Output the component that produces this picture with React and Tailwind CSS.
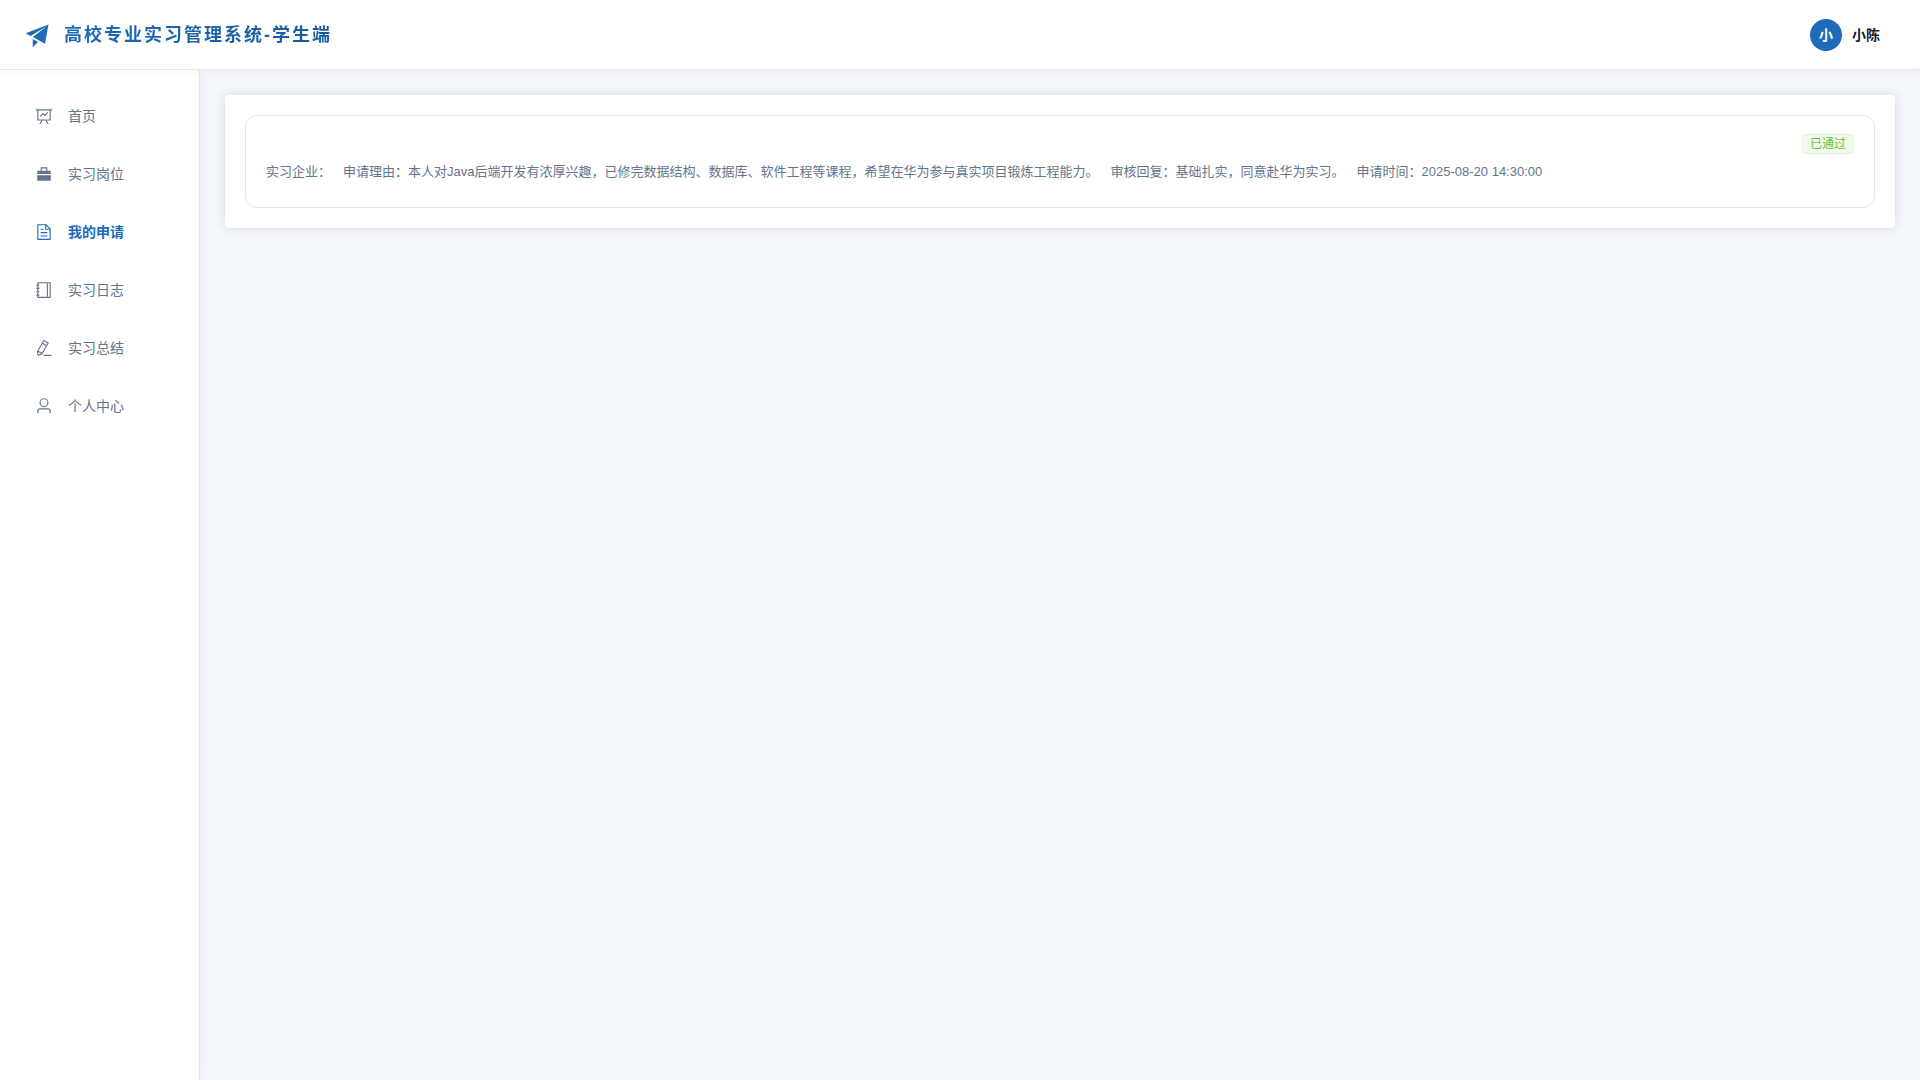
import React, { useState } from 'react';

const icons = {
  promotion: ['m64 448 832-320-128 704-446.08-243.328L832 192 242.816 545.472 64 448zm256 512V657.024L512 768 320 960z'],
  dataLine: ['M359.168 768H160a32 32 0 0 1-32-32V192H64a32 32 0 0 1 0-64h896a32 32 0 1 1 0 64h-64v544a32 32 0 0 1-32 32H665.216l110.848 192h-73.856L591.36 768H433.024L322.176 960H248.32l110.848-192zM832 192H192v512h640V192zM342.656 534.656a32 32 0 1 1-45.312-45.312L444.992 341.76l125.44 94.08L679.04 300.032a32 32 0 1 1 49.92 39.936L581.632 524.224 451.008 426.24 342.656 534.592z'],
  briefcase: ['M320 320V128h384v192h192v192H128V320h192zM128 576h768v320H128V576zm256-256h256.064V192H384v128z'],
  document: ['M832 384H576V128H192v768h640V384zm-26.496-64L640 154.496V320h165.504zM160 64h480l256 256v608a32 32 0 0 1-32 32H160a32 32 0 0 1-32-32V96a32 32 0 0 1 32-32zm160 448h384v64H320v-64zm0-192h160v64H320v-64zm0 384h384v64H320v-64z'],
  notebook: [
    'M192 128v768h640V128H192zm-32-64h704a32 32 0 0 1 32 32v832a32 32 0 0 1-32 32H160a32 32 0 0 1-32-32V96a32 32 0 0 1 32-32z',
    'M672 128h64v768h-64zM96 192h128q32 0 32 32t-32 32H96q-32 0-32-32t32-32zm0 192h128q32 0 32 32t-32 32H96q-32 0-32-32t32-32zm0 192h128q32 0 32 32t-32 32H96q-32 0-32-32t32-32zm0 192h128q32 0 32 32t-32 32H96q-32 0-32-32t32-32z',
  ],
  editPen: ['m199.04 672.64 193.984 112 224-387.968-193.92-112-224 388.032zm-23.872 60.16 32.896 148.288 144.896-45.696L175.168 732.8zM455.04 229.248l193.92 112 56.704-98.112-193.984-112-56.64 98.112zM104.32 708.8l384-665.024 304.768 175.936L409.152 884.8h.064l-248.448 78.336L104.32 708.8zm384 254.272v-64h448v64h-448z'],
  user: ['M512 512a192 192 0 1 0 0-384 192 192 0 0 0 0 384zm0 64a256 256 0 1 1 0-512 256 256 0 0 1 0 512zm320 320v-96a96 96 0 0 0-96-96H288a96 96 0 0 0-96 96v96a32 32 0 1 1-64 0v-96a160 160 0 0 1 160-160h448a160 160 0 0 1 160 160v96a32 32 0 1 1-64 0z'],
};

const menu = [
  { key: 'home', label: '首页', icon: 'dataLine' },
  { key: 'posts', label: '实习岗位', icon: 'briefcase' },
  { key: 'applications', label: '我的申请', icon: 'document' },
  { key: 'logs', label: '实习日志', icon: 'notebook' },
  { key: 'summary', label: '实习总结', icon: 'editPen' },
  { key: 'profile', label: '个人中心', icon: 'user' },
];

const applications = [
  {
    id: 1,
    company: '',
    reason: '本人对Java后端开发有浓厚兴趣，已修完数据结构、数据库、软件工程等课程，希望在华为参与真实项目锻炼工程能力。',
    reply: '基础扎实，同意赴华为实习。',
    time: '2025-08-20 14:30:00',
    status: '已通过',
  },
];

function Icon({ name, className }) {
  return (
    <svg viewBox="0 0 1024 1024" fill="currentColor" aria-hidden="true" className={className}>
      {icons[name].map((d) => <path key={d} d={d} />)}
    </svg>
  );
}

function Header() {
  return (
    <header className="relative z-10 h-[70px] shrink-0 flex items-center justify-between pl-6 pr-10 bg-white border-b border-[#e2e8f0] shadow-[0_2px_12px_rgba(0,0,0,0.04)]">
      <div className="flex items-center gap-3">
        <Icon name="promotion" className="w-7 h-7 text-[#1e6bb8]" />
        <h1 className="text-lg leading-[30px] font-bold tracking-[2px] bg-linear-135 from-[#1e6bb8] to-[#155a9c] bg-clip-text text-transparent">
          高校专业实习管理系统-学生端
        </h1>
      </div>
      <button type="button" className="flex items-center gap-2.5">
        <span className="w-8 h-8 rounded-full bg-[#1e6bb8] text-white text-sm font-bold flex items-center justify-center">小</span>
        <span className="text-sm font-bold text-[#1a202c]">小陈</span>
      </button>
    </header>
  );
}

function Sidebar({ active, onSelect }) {
  return (
    <aside className="w-[200px] shrink-0 bg-white border-r border-[#e2e8f0] shadow-[2px_0_12px_rgba(0,0,0,0.04)] pt-[21px]">
      <nav className="flex flex-col gap-2 px-3">
        {menu.map((item) => (
          <a
            key={item.key}
            href={`#${item.key}`}
            onClick={() => onSelect(item.key)}
            className={`h-[50px] flex items-center gap-[15px] pl-[23px] text-sm ${
              active === item.key ? 'text-[#1e6bb8] font-bold' : 'text-[#64748b]'
            }`}
          >
            <Icon name={item.icon} className="w-[18px] h-[18px] shrink-0" />
            <span>{item.label}</span>
          </a>
        ))}
      </nav>
    </aside>
  );
}

function ApplicationCard({ item }) {
  return (
    <article className="border border-[#e2e8f0] rounded-xl px-5 py-[18px]">
      <div className="flex justify-end">
        <span className="h-5 px-[7px] flex items-center rounded border border-[#e1f3d8] bg-[#f0f9eb] text-xs text-[#67c23a]">
          {item.status}
        </span>
      </div>
      <p className="my-2 text-[13px] leading-[19px] text-[#64748b]">
        <span className="mr-3">实习企业：{item.company}</span>
        <span className="mr-3">申请理由：{item.reason}</span>
        <span className="mr-3">审核回复：{item.reply}</span>
        <span>申请时间：{item.time}</span>
      </p>
    </article>
  );
}

export default function App() {
  const [active, setActive] = useState('applications');

  return (
    <div lang="zh-CN" className="min-h-screen flex flex-col bg-[#f4f7fc] font-['Liberation_Sans','Noto_Sans_CJK_SC',sans-serif]">
      <Header />
      <div className="flex-1 flex">
        <Sidebar active={active} onSelect={setActive} />
        <main className="flex-1 min-w-0 p-[25px]">
          <section className="bg-white rounded p-5 shadow-[0_0_12px_rgba(0,0,0,0.12)]">
            {applications.map((item) => <ApplicationCard key={item.id} item={item} />)}
          </section>
        </main>
      </div>
    </div>
  );
}
